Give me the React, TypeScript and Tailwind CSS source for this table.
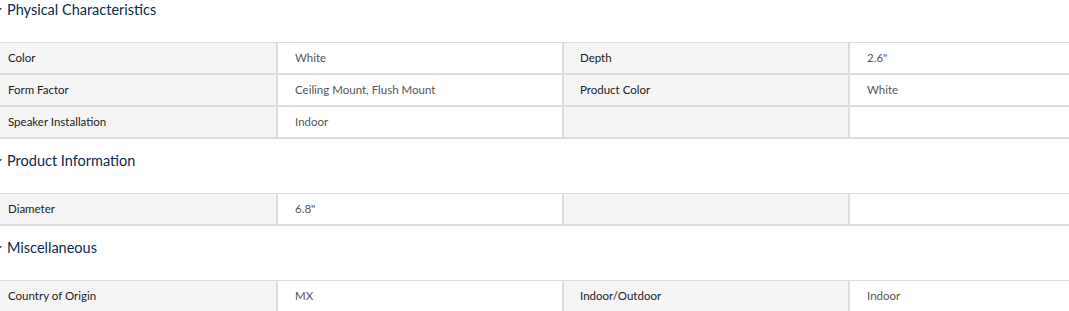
import { ChevronDown } from 'lucide-react';

type Cell = { label: string; value: string };

const sections: { title: string; rows: [Cell | null, Cell | null][] }[] = [
  {
    title: 'Physical Characteristics',
    rows: [
      [{ label: 'Color', value: 'White' }, { label: 'Depth', value: '2.6"' }],
      [{ label: 'Form Factor', value: 'Ceiling Mount, Flush Mount' }, { label: 'Product Color', value: 'White' }],
      [{ label: 'Speaker Installation', value: 'Indoor' }, null],
    ],
  },
  {
    title: 'Product Information',
    rows: [[{ label: 'Diameter', value: '6.8"' }, null]],
  },
  {
    title: 'Miscellaneous',
    rows: [[{ label: 'Country of Origin', value: 'MX' }, { label: 'Indoor/Outdoor', value: 'Indoor' }]],
  },
];

function Pair({ cell, last }: { cell: Cell | null; last?: boolean }) {
  return (
    <>
      <div className="h-[30px] flex items-center px-[16px] bg-[#f5f5f5] border-r-2 border-[#dddddd] text-[#222]">
        {cell?.label}
      </div>
      <div className={`h-[30px] flex items-center px-[17px] bg-white text-[#555] ${last ? '' : 'border-r-2 border-[#dddddd]'}`}>
        {cell?.value}
      </div>
    </>
  );
}

export default function App() {
  return (
    <div className="w-[1069px] h-[311px] overflow-hidden bg-white" style={{ fontFamily: 'Lato, "Open Sans", sans-serif' }}>
      <div className="-ml-[8px] w-[1144px]">
        {sections.map((s, i) => (
          <section key={s.title} className={i === 0 ? '' : 'mt-[12px]'}>
            <h3 className="flex items-center h-[20px] text-[14.5px] text-[#0b2a52]">
              <ChevronDown size={12} strokeWidth={2.2} className="mr-[3px] shrink-0" />
              {s.title}
            </h3>
            <div className="mt-[22px] border-t border-[#dddddd]">
              {s.rows.map((r, j) => (
                <div key={j} className="grid grid-cols-[286px_286px_286px_286px] border-b-2 border-[#dddddd] text-[11.5px]">
                  <Pair cell={r[0]} />
                  <Pair cell={r[1]} last />
                </div>
              ))}
            </div>
          </section>
        ))}
      </div>
    </div>
  );
}
